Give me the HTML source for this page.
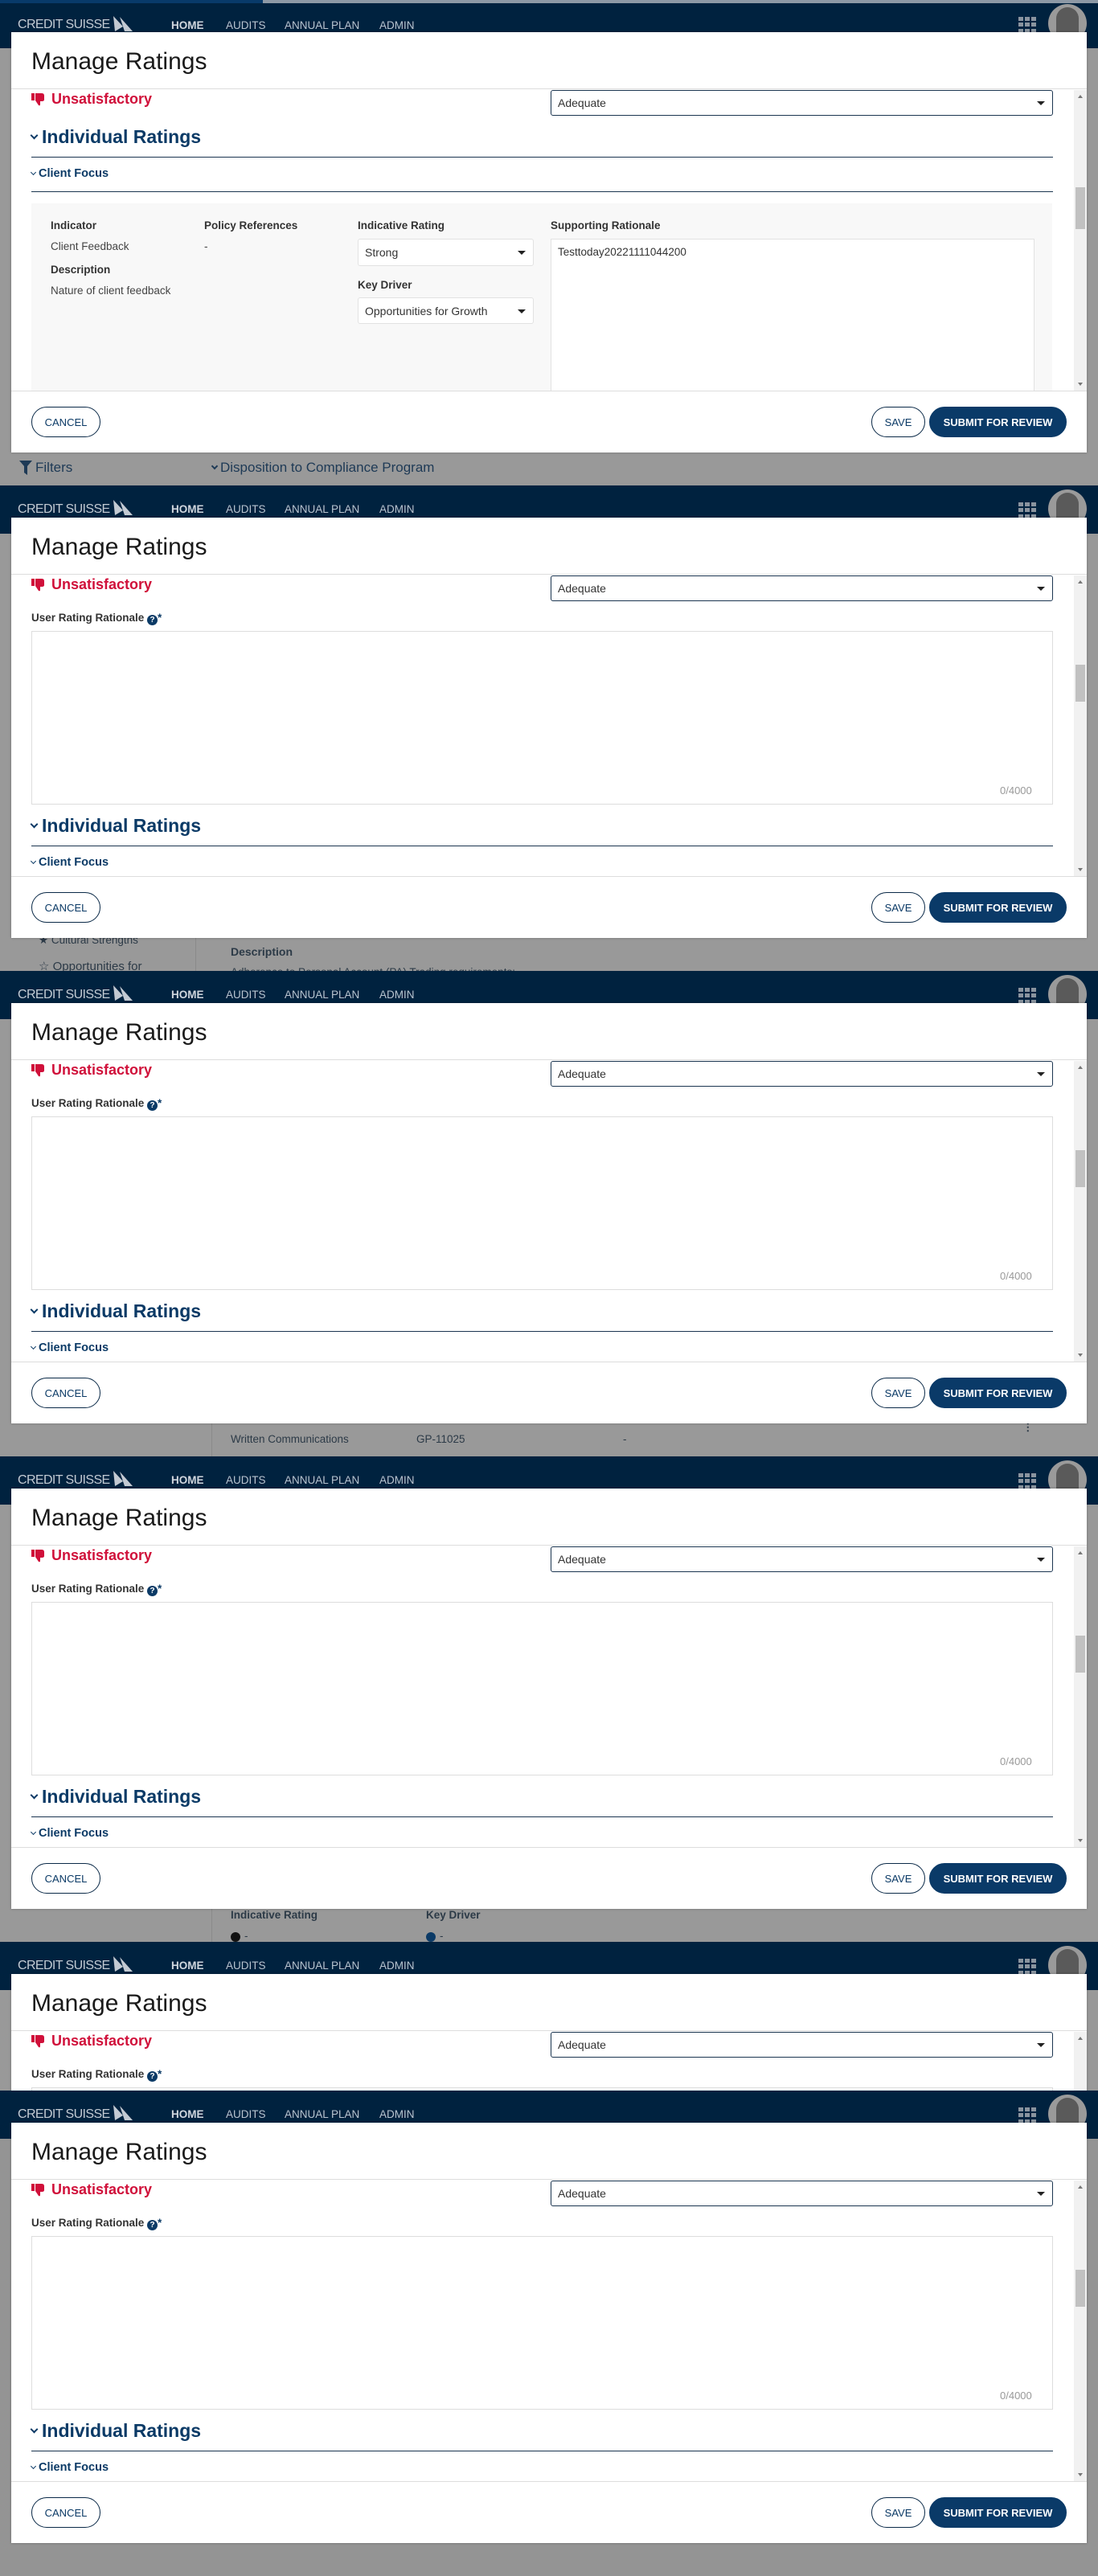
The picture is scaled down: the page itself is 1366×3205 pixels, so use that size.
<!DOCTYPE html>
<html><head><meta charset="utf-8">
<style>
*{box-sizing:border-box;margin:0;padding:0}
body{width:1366px;height:3205px;background:#949494;font-family:"Liberation Sans",Arial,sans-serif;position:relative;overflow:hidden}
.seg{position:absolute;left:0;width:1366px;height:604px;overflow:hidden;background:#999}
.hdr{position:absolute;left:0;top:0;width:1366px;height:60px;background:#00223f}
.logo{position:absolute;left:22px;top:21px;font-size:16px;color:#c3cad3;letter-spacing:-0.6px}
.sail{position:absolute;left:139px;top:17px}
.nav{position:absolute;top:22px;font-size:13.5px;color:#b9c3cf}
.nav.b{font-weight:bold;color:#d0d6de}
.grid{position:absolute;left:1267px;top:21px;width:23px;height:20px;display:grid;grid-template-columns:repeat(3,6px);gap:2px}
.grid i{background:#8a949f;height:5px}
.av{position:absolute;left:1304px;top:5px;width:48px;height:48px;border-radius:50%;background:#9a9a9a;overflow:hidden}
.av i{position:absolute;left:10px;top:4px;width:28px;height:40px;border-radius:14px 14px 6px 6px;background:#5a5a5a}
.modal{position:absolute;left:14px;top:40px;width:1338px;height:523px;background:#fff;box-shadow:0 0 3px rgba(0,0,0,.3)}
.title{position:absolute;left:25px;top:20px;font-size:30px;color:#1a1a1a}
.tdiv{position:absolute;left:0;top:70px;width:1338px;height:1px;background:#ddd}
.fdiv{position:absolute;left:0;top:446px;width:1338px;height:1px;background:#ddd}
.unsat{position:absolute;left:25px;top:73px;font-size:18px;font-weight:bold;color:#d0103a;display:flex;align-items:center;gap:8px}
.sel{position:absolute;border:1px solid #ccc;border-radius:3px;background:#fff;font-size:14px;color:#333;padding-left:8px;display:flex;align-items:center}
.sel:after{content:"";position:absolute;right:9px;top:50%;margin-top:-2px;border-left:5px solid transparent;border-right:5px solid transparent;border-top:5px solid #222}
.sel.dark{border-color:#1b3550}
.h2{position:absolute;left:25px;font-size:23px;font-weight:bold;color:#0b3a66;display:flex;align-items:center;gap:6px}
.h3{position:absolute;left:25px;font-size:14.5px;font-weight:bold;color:#0b3a66;display:flex;align-items:center;gap:4px}
.ch{display:inline-block;width:7px;height:7px;border-right:2.5px solid #0b3a66;border-bottom:2.5px solid #0b3a66;transform:rotate(45deg);margin-top:-5px}
.h3 .ch{width:5px;height:5px;border-width:1.8px;margin-top:-3px}
.line{position:absolute;left:25px;width:1271px;height:1px;background:#1b3550}
.lbl{position:absolute;font-size:13.5px;font-weight:bold;color:#333}
.txt{position:absolute;font-size:13.5px;color:#444}
.sb{position:absolute;left:1322px;top:72px;width:16px;height:374px;background:#f1f1f1}
.sb .th{position:absolute;left:2px;width:12px;background:#c1c1c1}
.sb .up,.sb .dn{position:absolute;left:5px;border-left:3px solid transparent;border-right:3px solid transparent}
.sb .up{top:6px;border-bottom:4px solid #777}
.sb .dn{bottom:6px;border-top:4px solid #777}
.btn{position:absolute;top:466px;height:38px;border:1px solid #0b2a48;border-radius:19px;font-size:13px;color:#0b3a66;display:flex;align-items:center;justify-content:center;background:#fff}
.btn.p{background:#0a3a68;color:#fff;font-weight:bold;border-color:#0a3a68}
.bg{position:absolute;color:#2c3a47;font-size:13.5px}
.q{display:inline-block;width:13px;height:13px;border-radius:50%;background:#0b3a66;color:#fff;font-size:10px;text-align:center;line-height:13px;vertical-align:-1px}
</style></head><body>

<div class="seg" style="top:0">
  <div class="hdr"></div>
  <div style="position:absolute;left:0;top:0;width:327px;height:4px;background:#083a6a"></div>
  <div style="position:absolute;left:327px;top:0;width:1039px;height:4px;background:#8d99a6"></div>
  <div class="logo" style="top:22px">CREDIT SUISSE</div>
  <svg class="sail" style="top:19px" width="28" height="22" viewBox="0 0 28 22"><path d="M2 1 L14 14 L4 20 Z" fill="#c3cad3"/><path d="M10 2 L26 20 L16 20 Z" fill="#c3cad3"/></svg>
  <div class="nav b" style="left:213px;top:24px">HOME</div><div class="nav" style="left:281px;top:24px">AUDITS</div><div class="nav" style="left:354px;top:24px">ANNUAL PLAN</div><div class="nav" style="left:472px;top:24px">ADMIN</div>
  <div class="grid"><i></i><i></i><i></i><i></i><i></i><i></i><i></i><i></i><i></i></div>
  <div class="av"><i></i></div>
  <div class="bg" style="left:24px;top:572px;font-size:17px;color:#1e3a56;display:flex;align-items:center;gap:4px"><svg width="16" height="18" viewBox="0 0 16 18"><path d="M0 0H16L10 7V18L6 15V7Z" fill="#1e3a56"/></svg>Filters</div>
  <div class="bg" style="left:264px;top:572px;font-size:17px;color:#1e3a56;display:flex;align-items:center;gap:4px"><span class="ch" style="width:6px;height:6px;border-width:2px;border-color:#1e3a56"></span>Disposition to Compliance Program</div>
  <div class="modal">
    <div class="title">Manage Ratings</div><div class="tdiv"></div>
    <div class="unsat"><svg width="17" height="17" viewBox="0 0 17 17"><rect x="0" y="1" width="4" height="9" fill="#d0103a"/><path d="M5 1H13Q16 1 16 4V9Q16 11 13 11H11L11 15Q11 17 9 16L5 10Z" fill="#d0103a"/></svg>Unsatisfactory</div>
    <div class="sel dark" style="left:671px;top:72px;width:625px;height:32px">Adequate</div>
    <div class="h2" style="top:117px"><span class="ch"></span>Individual Ratings</div>
    <div class="line" style="top:155px"></div>
    <div class="h3" style="top:168px"><span class="ch"></span>Client Focus</div>
    <div class="line" style="top:198px"></div>
    <div style="position:absolute;left:25px;top:213px;width:1270px;height:233px;background:#f8f8f8"></div>
    <div class="lbl" style="left:49px;top:233px">Indicator</div>
    <div class="lbl" style="left:240px;top:233px">Policy References</div>
    <div class="lbl" style="left:431px;top:233px">Indicative Rating</div>
    <div class="lbl" style="left:671px;top:233px">Supporting Rationale</div>
    <div class="txt" style="left:49px;top:259px">Client Feedback</div>
    <div class="txt" style="left:240px;top:259px">-</div>
    <div class="lbl" style="left:49px;top:288px">Description</div>
    <div class="txt" style="left:49px;top:314px">Nature of client feedback</div>
    <div class="sel" style="left:431px;top:257px;width:219px;height:34px;border-color:#e2e2e2">Strong</div>
    <div class="lbl" style="left:431px;top:307px">Key Driver</div>
    <div class="sel" style="left:431px;top:330px;width:219px;height:33px;border-color:#e2e2e2">Opportunities for Growth</div>
    <div style="position:absolute;left:671px;top:257px;width:602px;height:189px;background:#fff;border:1px solid #e2e2e2;border-bottom:none;font-size:13.5px;color:#333;padding:8px 8px">Testtoday20221111044200</div>
    <div class="sb"><div class="up"></div><div class="th" style="top:121px;height:52px"></div><div class="dn"></div></div>
    <div class="fdiv"></div>
    <div class="btn" style="left:25px;width:86px">CANCEL</div>
    <div class="btn" style="left:1070px;width:67px">SAVE</div>
    <div class="btn p" style="left:1142px;width:171px">SUBMIT FOR REVIEW</div>
  </div>
</div>

<div class="seg" style="top:604px">
  <div class="hdr"></div>
  <div class="logo">CREDIT SUISSE</div>
  <svg class="sail" width="28" height="22" viewBox="0 0 28 22"><path d="M2 1 L14 14 L4 20 Z" fill="#c3cad3"/><path d="M10 2 L26 20 L16 20 Z" fill="#c3cad3"/></svg>
  <div class="nav b" style="left:213px">HOME</div><div class="nav" style="left:281px">AUDITS</div><div class="nav" style="left:354px">ANNUAL PLAN</div><div class="nav" style="left:472px">ADMIN</div>
  <div class="grid"><i></i><i></i><i></i><i></i><i></i><i></i><i></i><i></i><i></i></div>
  <div class="av"><i></i></div>
  <div style="position:absolute;left:24px;top:540px;width:220px;height:64px;border-right:1px solid #8a8a8a"></div>
  <div class="bg" style="left:48px;top:558px">&#9733; Cultural Strengths</div>
  <div class="bg" style="left:48px;top:589px;font-size:15px">&#9734; Opportunities for</div>
  <div class="bg" style="left:287px;top:572px;font-weight:bold;font-size:14px">Description</div>
  <div class="bg" style="left:287px;top:598px">Adherence to Personal Account (PA) Trading requirements:</div>
  <div class="modal">
    <div class="title">Manage Ratings</div><div class="tdiv"></div>
    <div class="unsat"><svg width="17" height="17" viewBox="0 0 17 17"><rect x="0" y="1" width="4" height="9" fill="#d0103a"/><path d="M5 1H13Q16 1 16 4V9Q16 11 13 11H11L11 15Q11 17 9 16L5 10Z" fill="#d0103a"/></svg>Unsatisfactory</div>
    <div class="sel dark" style="left:671px;top:72px;width:625px;height:32px">Adequate</div>
    <div class="lbl" style="left:25px;top:117px">User Rating Rationale <span class="q">?</span><span style="color:#0b3a66">*</span></div>
    <div style="position:absolute;left:25px;top:141px;width:1271px;height:216px;border:1px solid #ddd"></div>
    <div class="txt" style="left:1230px;top:332px;color:#999;font-size:13px">0/4000</div>
    <div class="h2" style="top:370px"><span class="ch"></span>Individual Ratings</div>
    <div class="line" style="top:408px"></div>
    <div class="h3" style="top:421px"><span class="ch"></span>Client Focus</div>
    <div class="sb"><div class="up"></div><div class="th" style="top:111px;height:46px"></div><div class="dn"></div></div>
    <div class="fdiv"></div>
    <div class="btn" style="left:25px;width:86px">CANCEL</div>
    <div class="btn" style="left:1070px;width:67px">SAVE</div>
    <div class="btn p" style="left:1142px;width:171px">SUBMIT FOR REVIEW</div>
  </div>
</div>

<div class="seg" style="top:1208px">
  <div class="hdr"></div>
  <div class="logo">CREDIT SUISSE</div>
  <svg class="sail" width="28" height="22" viewBox="0 0 28 22"><path d="M2 1 L14 14 L4 20 Z" fill="#c3cad3"/><path d="M10 2 L26 20 L16 20 Z" fill="#c3cad3"/></svg>
  <div class="nav b" style="left:213px">HOME</div><div class="nav" style="left:281px">AUDITS</div><div class="nav" style="left:354px">ANNUAL PLAN</div><div class="nav" style="left:472px">ADMIN</div>
  <div class="grid"><i></i><i></i><i></i><i></i><i></i><i></i><i></i><i></i><i></i></div>
  <div class="av"><i></i></div>
  <div style="position:absolute;left:263px;top:540px;width:1px;height:64px;background:#8a8a8a"></div>
  <div class="bg" style="left:287px;top:575px">Written Communications</div>
  <div class="bg" style="left:518px;top:575px">GP-11025</div>
  <div class="bg" style="left:775px;top:575px">-</div>
  <div class="bg" style="left:1272px;top:560px;font-weight:bold">&#8942;</div>
  <div class="modal">
    <div class="title">Manage Ratings</div><div class="tdiv"></div>
    <div class="unsat"><svg width="17" height="17" viewBox="0 0 17 17"><rect x="0" y="1" width="4" height="9" fill="#d0103a"/><path d="M5 1H13Q16 1 16 4V9Q16 11 13 11H11L11 15Q11 17 9 16L5 10Z" fill="#d0103a"/></svg>Unsatisfactory</div>
    <div class="sel dark" style="left:671px;top:72px;width:625px;height:32px">Adequate</div>
    <div class="lbl" style="left:25px;top:117px">User Rating Rationale <span class="q">?</span><span style="color:#0b3a66">*</span></div>
    <div style="position:absolute;left:25px;top:141px;width:1271px;height:216px;border:1px solid #ddd"></div>
    <div class="txt" style="left:1230px;top:332px;color:#999;font-size:13px">0/4000</div>
    <div class="h2" style="top:370px"><span class="ch"></span>Individual Ratings</div>
    <div class="line" style="top:408px"></div>
    <div class="h3" style="top:421px"><span class="ch"></span>Client Focus</div>
    <div class="sb"><div class="up"></div><div class="th" style="top:111px;height:46px"></div><div class="dn"></div></div>
    <div class="fdiv"></div>
    <div class="btn" style="left:25px;width:86px">CANCEL</div>
    <div class="btn" style="left:1070px;width:67px">SAVE</div>
    <div class="btn p" style="left:1142px;width:171px">SUBMIT FOR REVIEW</div>
  </div>
</div>

<div class="seg" style="top:1812px">
  <div class="hdr"></div>
  <div class="logo">CREDIT SUISSE</div>
  <svg class="sail" width="28" height="22" viewBox="0 0 28 22"><path d="M2 1 L14 14 L4 20 Z" fill="#c3cad3"/><path d="M10 2 L26 20 L16 20 Z" fill="#c3cad3"/></svg>
  <div class="nav b" style="left:213px">HOME</div><div class="nav" style="left:281px">AUDITS</div><div class="nav" style="left:354px">ANNUAL PLAN</div><div class="nav" style="left:472px">ADMIN</div>
  <div class="grid"><i></i><i></i><i></i><i></i><i></i><i></i><i></i><i></i><i></i></div>
  <div class="av"><i></i></div>
  <div style="position:absolute;left:263px;top:540px;width:1px;height:64px;background:#8a8a8a"></div>
  <div class="bg" style="left:287px;top:563px;font-weight:bold">Indicative Rating</div>
  <div class="bg" style="left:530px;top:563px;font-weight:bold">Key Driver</div>
  <div style="position:absolute;left:287px;top:592px;width:12px;height:12px;border-radius:50%;background:#111"></div>
  <div class="bg" style="left:304px;top:589px">-</div>
  <div style="position:absolute;left:530px;top:592px;width:12px;height:12px;border-radius:50%;background:#0b3a66"></div>
  <div class="bg" style="left:547px;top:589px">-</div>
  <div class="modal">
    <div class="title">Manage Ratings</div><div class="tdiv"></div>
    <div class="unsat"><svg width="17" height="17" viewBox="0 0 17 17"><rect x="0" y="1" width="4" height="9" fill="#d0103a"/><path d="M5 1H13Q16 1 16 4V9Q16 11 13 11H11L11 15Q11 17 9 16L5 10Z" fill="#d0103a"/></svg>Unsatisfactory</div>
    <div class="sel dark" style="left:671px;top:72px;width:625px;height:32px">Adequate</div>
    <div class="lbl" style="left:25px;top:117px">User Rating Rationale <span class="q">?</span><span style="color:#0b3a66">*</span></div>
    <div style="position:absolute;left:25px;top:141px;width:1271px;height:216px;border:1px solid #ddd"></div>
    <div class="txt" style="left:1230px;top:332px;color:#999;font-size:13px">0/4000</div>
    <div class="h2" style="top:370px"><span class="ch"></span>Individual Ratings</div>
    <div class="line" style="top:408px"></div>
    <div class="h3" style="top:421px"><span class="ch"></span>Client Focus</div>
    <div class="sb"><div class="up"></div><div class="th" style="top:111px;height:46px"></div><div class="dn"></div></div>
    <div class="fdiv"></div>
    <div class="btn" style="left:25px;width:86px">CANCEL</div>
    <div class="btn" style="left:1070px;width:67px">SAVE</div>
    <div class="btn p" style="left:1142px;width:171px">SUBMIT FOR REVIEW</div>
  </div>
</div>

<div class="seg" style="top:2416px;height:185px">
  <div class="hdr"></div>
  <div class="logo">CREDIT SUISSE</div>
  <svg class="sail" width="28" height="22" viewBox="0 0 28 22"><path d="M2 1 L14 14 L4 20 Z" fill="#c3cad3"/><path d="M10 2 L26 20 L16 20 Z" fill="#c3cad3"/></svg>
  <div class="nav b" style="left:213px">HOME</div><div class="nav" style="left:281px">AUDITS</div><div class="nav" style="left:354px">ANNUAL PLAN</div><div class="nav" style="left:472px">ADMIN</div>
  <div class="grid"><i></i><i></i><i></i><i></i><i></i><i></i><i></i><i></i><i></i></div>
  <div class="av"><i></i></div>
  <div class="modal">
    <div class="title">Manage Ratings</div><div class="tdiv"></div>
    <div class="unsat"><svg width="17" height="17" viewBox="0 0 17 17"><rect x="0" y="1" width="4" height="9" fill="#d0103a"/><path d="M5 1H13Q16 1 16 4V9Q16 11 13 11H11L11 15Q11 17 9 16L5 10Z" fill="#d0103a"/></svg>Unsatisfactory</div>
    <div class="sel dark" style="left:671px;top:72px;width:625px;height:32px">Adequate</div>
    <div class="lbl" style="left:25px;top:117px">User Rating Rationale <span class="q">?</span><span style="color:#0b3a66">*</span></div>
    <div style="position:absolute;left:25px;top:141px;width:1271px;height:216px;border:1px solid #ddd"></div>
    <div class="sb"><div class="up"></div><div class="th" style="top:111px;height:46px"></div><div class="dn"></div></div>
  </div>
</div>

<div class="seg" style="top:2601px;background:#949494">
  <div class="hdr"></div>
  <div class="logo">CREDIT SUISSE</div>
  <svg class="sail" width="28" height="22" viewBox="0 0 28 22"><path d="M2 1 L14 14 L4 20 Z" fill="#c3cad3"/><path d="M10 2 L26 20 L16 20 Z" fill="#c3cad3"/></svg>
  <div class="nav b" style="left:213px">HOME</div><div class="nav" style="left:281px">AUDITS</div><div class="nav" style="left:354px">ANNUAL PLAN</div><div class="nav" style="left:472px">ADMIN</div>
  <div class="grid"><i></i><i></i><i></i><i></i><i></i><i></i><i></i><i></i><i></i></div>
  <div class="av"><i></i></div>
  <div class="modal">
    <div class="title">Manage Ratings</div><div class="tdiv"></div>
    <div class="unsat"><svg width="17" height="17" viewBox="0 0 17 17"><rect x="0" y="1" width="4" height="9" fill="#d0103a"/><path d="M5 1H13Q16 1 16 4V9Q16 11 13 11H11L11 15Q11 17 9 16L5 10Z" fill="#d0103a"/></svg>Unsatisfactory</div>
    <div class="sel dark" style="left:671px;top:72px;width:625px;height:32px">Adequate</div>
    <div class="lbl" style="left:25px;top:117px">User Rating Rationale <span class="q">?</span><span style="color:#0b3a66">*</span></div>
    <div style="position:absolute;left:25px;top:141px;width:1271px;height:216px;border:1px solid #ddd"></div>
    <div class="txt" style="left:1230px;top:332px;color:#999;font-size:13px">0/4000</div>
    <div class="h2" style="top:370px"><span class="ch"></span>Individual Ratings</div>
    <div class="line" style="top:408px"></div>
    <div class="h3" style="top:421px"><span class="ch"></span>Client Focus</div>
    <div class="sb"><div class="up"></div><div class="th" style="top:111px;height:46px"></div><div class="dn"></div></div>
    <div class="fdiv"></div>
    <div class="btn" style="left:25px;width:86px">CANCEL</div>
    <div class="btn" style="left:1070px;width:67px">SAVE</div>
    <div class="btn p" style="left:1142px;width:171px">SUBMIT FOR REVIEW</div>
  </div>
</div>

</body></html>
